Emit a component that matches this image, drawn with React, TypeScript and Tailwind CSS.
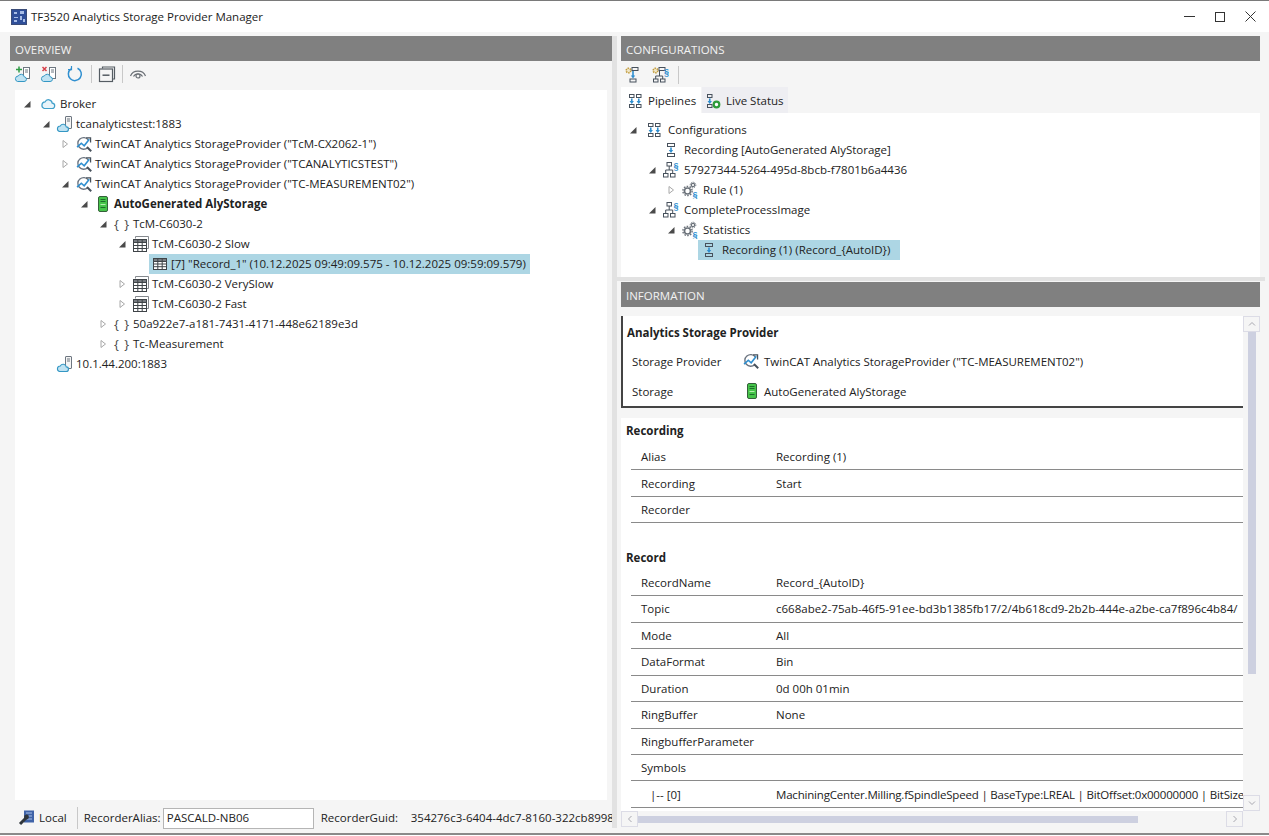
import type { ReactNode } from "react";

const dark = "#47515c";
const blue = "#2f8fd0";

function Cloud() {
  return (
    <svg viewBox="0 0 16 16" width="16" height="16" fill="none">
      <path d="M4.2 12.5h7.6a2.7 2.7 0 0 0 .4-5.4A3.8 3.8 0 0 0 5 5.9a3.4 3.4 0 0 0-.8 6.6Z" fill="#e8f4fa" stroke="#3f9fca" strokeWidth="1.2" />
    </svg>
  );
}

function ServerCloud() {
  return (
    <svg viewBox="0 0 18 18" width="18" height="18" fill="none">
      <rect x="9.5" y="1.5" width="6" height="12" rx="0.5" fill="#f4f4f4" stroke="#6d7680" />
      <path d="M11 4h3M11 6h3" stroke="#6d7680" />
      <path d="M3.5 16.5h6.5a2.3 2.3 0 0 0 .3-4.6 3.2 3.2 0 0 0-6-.9 2.8 2.8 0 0 0-.8 5.5Z" fill="#bfe2f2" stroke="#3497c4" strokeWidth="1.1" />
    </svg>
  );
}

function Provider() {
  return (
    <svg viewBox="0 0 16 16" width="17" height="17" fill="none">
      <path d="M11.5 3.5A5.5 5.5 0 1 0 11 11" stroke="#6b7480" strokeWidth="1.3" />
      <path d="M1 10.5 5 6.8l2.7 2.4L12.5 3" stroke={blue} strokeWidth="1.5" />
      <path d="M9.5 1.8h4.2V6" stroke={dark} strokeWidth="1.2" />
      <path d="m10.3 10.3 4 4" stroke={dark} strokeWidth="1.9" />
    </svg>
  );
}

function Storage() {
  return (
    <svg viewBox="0 0 16 16" width="16" height="16">
      <rect x="3.5" y="0.5" width="9" height="15" rx="1.5" fill="#46c44a" stroke="#34603a" />
      <path d="M5.5 3.5h5M5.5 5.5h5M5.5 11.5h5" stroke="#1d6e2b" strokeWidth="1" />
      <rect x="5.5" y="8" width="5" height="1" fill="#b6f0b0" />
    </svg>
  );
}

function Braces() {
  return <span className="w-[16px] whitespace-nowrap text-center text-[13px] leading-none tracking-[1px] text-[#4b4b4b]">{"{ }"}</span>;
}

function Grid() {
  return (
    <svg viewBox="0 0 16 16" width="16" height="16" fill="none" stroke="#3f4448">
      <rect x="1.5" y="2.5" width="13" height="11" fill="#fff" />
      <path d="M1.5 2.5h13v3h-13z" fill="#777b80" />
      <path d="M1.5 8h13M1.5 10.7h13M5.8 2.5v11M10.2 2.5v11" />
    </svg>
  );
}

function GridStack() {
  return (
    <svg viewBox="0 0 18 18" width="18" height="18" fill="none" stroke="#3f4448">
      <path d="M3.5 3.5v-2h13v12h-1.5" stroke="#85898e" />
      <rect x="1.5" y="4.5" width="13" height="12" fill="#fff" />
      <path d="M1.5 4.5h13v3h-13z" fill="#777b80" />
      <path d="M1.5 10.5h13M1.5 13.5h13M5.8 4.5v12M10.2 4.5v12" />
    </svg>
  );
}

function ArrowDown({ x }: { x: number }) {
  return (
    <>
      <path d={`M${x} 5.5v3`} stroke={blue} strokeWidth="1.6" />
      <path d={`M${x - 2.2} 8h4.4L${x} 11Z`} fill={blue} stroke="none" />
    </>
  );
}

function Pipeline({ double = false, live = false }: { double?: boolean; live?: boolean }) {
  return (
    <svg viewBox="0 0 16 16" width="16" height="16" fill="none" stroke={dark}>
      <rect x="2.5" y="1.5" width="4.5" height="3" />
      <rect x="2.5" y="11.5" width="4.5" height="3" />
      <ArrowDown x={4.75} />
      {double && (
        <>
          <rect x="9.5" y="1.5" width="4.5" height="3" />
          <rect x="9.5" y="11.5" width="4.5" height="3" />
          <ArrowDown x={11.75} />
        </>
      )}
      {live && <circle cx="11.5" cy="11.5" r="2.8" fill="#fff" stroke="#2e9c3a" strokeWidth="2.2" />}
    </svg>
  );
}

function Single() {
  return (
    <svg viewBox="0 0 16 16" width="16" height="16" fill="none" stroke={dark}>
      <rect x="4.5" y="1.5" width="7" height="3" />
      <rect x="4.5" y="11.5" width="7" height="3" />
      <ArrowDown x={8} />
    </svg>
  );
}

function Tree3() {
  return (
    <svg viewBox="0 0 18 18" width="18" height="18" fill="none" stroke={dark}>
      <rect x="5" y="1.5" width="4.5" height="3.5" />
      <rect x="1.5" y="12.5" width="4.5" height="3.5" />
      <rect x="8.5" y="12.5" width="4.5" height="3.5" />
      <path d="M7.2 5v4M3.7 12.5V9h7v3.5" />
      <text x="11.5" y="8" fontSize="9" fontWeight="700" fontFamily="Liberation Sans" fill={blue} stroke="none">§</text>
    </svg>
  );
}

function Gears() {
  return (
    <svg viewBox="0 0 18 18" width="18" height="18" fill="none" stroke="#6b727a">
      <circle cx="6.5" cy="10" r="3" strokeWidth="1.6" />
      <circle cx="6.5" cy="10" r="4.6" strokeWidth="1.4" strokeDasharray="1.6 1.29" />
      <circle cx="12" cy="4" r="1.7" strokeWidth="1.2" />
      <circle cx="12" cy="4" r="2.8" strokeWidth="1" strokeDasharray="1.2 1" />
      <text x="11.5" y="17" fontSize="9" fontWeight="700" fontFamily="Liberation Sans" fill={blue} stroke="none">§</text>
    </svg>
  );
}

function GearPipeline({ tree = false }: { tree?: boolean }) {
  return (
    <svg viewBox="0 0 18 18" width="18" height="18" fill="none" stroke={dark}>
      <circle cx="4.5" cy="4.5" r="2.3" fill="#f0e6c8" stroke="#c09a3a" strokeWidth="1.6" strokeDasharray="1.4 .8" />
      <rect x="8" y="1.5" width="6" height="3" />
      {tree ? (
        <>
          <rect x="2.5" y="13" width="4.5" height="3" />
          <rect x="9.5" y="13" width="4.5" height="3" />
          <path d="M4.7 13v-3h7v3M8.5 5v5" />
          <text x="13" y="9" fontSize="9" fontWeight="700" fontFamily="Liberation Sans" fill={blue} stroke="none">§</text>
        </>
      ) : (
        <>
          <rect x="6" y="13" width="6" height="3" />
          <path d="M9 5v5" stroke={blue} strokeWidth="1.6" />
          <path d="M6.8 9.5h4.4L9 12.5Z" fill={blue} stroke="none" />
        </>
      )}
    </svg>
  );
}

function ToolCloud({ kind }: { kind: "add" | "remove" }) {
  return (
    <svg viewBox="0 0 18 18" width="18" height="18" fill="none">
      <rect x="9.5" y="2.5" width="6" height="11" fill="#fff" stroke="#6d7680" />
      <path d="M11 5h3M11 7h3" stroke="#6d7680" />
      <path d="M3.5 16.5h6.5a2.3 2.3 0 0 0 .3-4.6 3.2 3.2 0 0 0-6-.9 2.8 2.8 0 0 0-.8 5.5Z" fill="#bfe2f2" stroke="#3497c4" />
      {kind === "add" ? (
        <path d="M5 1.5v6M2 4.5h6" stroke="#2f9c45" strokeWidth="1.5" />
      ) : (
        <path d="m2.5 2 4 4M6.5 2l-4 4" stroke="#d6404a" strokeWidth="1.5" />
      )}
    </svg>
  );
}

function Refresh() {
  return (
    <svg viewBox="0 0 18 18" width="18" height="18" fill="none" stroke={blue} strokeWidth="1.5">
      <path d="M11.5 3.2A6.5 6.5 0 1 1 5 3.9" />
      <path d="M5.5 1v3.6H2" strokeWidth="1.2" />
    </svg>
  );
}

function Collapse() {
  return (
    <svg viewBox="0 0 18 18" width="18" height="18" fill="none" stroke="#555c63" strokeWidth="1.2">
      <path d="M4.5 3.5V2h12v12h-1.5" />
      <rect x="1.5" y="4" width="13" height="12.5" fill="#f5f5f5" />
      <path d="M4.5 10.2h7" strokeWidth="1.5" />
    </svg>
  );
}

function Eye() {
  return (
    <svg viewBox="0 0 18 18" width="18" height="18" fill="none" stroke="#6a6f75" strokeWidth="1.2">
      <path d="M1.5 11C4 4.5 14 4.5 16.5 11" />
      <path d="M4.5 11.5C6.5 8 11.5 8 13.5 11.5" />
      <circle cx="9" cy="11" r="2" />
    </svg>
  );
}

function Wrench() {
  return (
    <svg viewBox="0 0 18 18" width="18" height="18" fill="none">
      <rect x="6" y="1.5" width="10" height="12" fill="#3f63a8" />
      <path d="M8 4h6M8 7h6M8 10h6" stroke="#a9c1e8" />
      <path d="m2 15 6-6" stroke="#30363c" strokeWidth="3" />
      <circle cx="8.5" cy="8" r="2.4" fill="#30363c" />
    </svg>
  );
}

function Logo() {
  return (
    <svg viewBox="0 0 16 16" width="16" height="16">
      <rect x="0.5" y="0.5" width="15" height="15" fill="#2f4f9a" stroke="#3b4c78" />
      <path d="M3 3h3v2H3zM9 2h4v3H9zM3 8h4v1H3zM9 7h2v4H9zM3 11h3v2H3zM12 10h2v3h-2z" fill="#a8bde6" />
    </svg>
  );
}

function Expander({ state }: { state?: "open" | "closed" }) {
  if (state === "open")
    return (
      <svg viewBox="0 0 10 10" width="10" height="10" className="shrink-0">
        <path d="M8.5 2v6.5H2Z" fill="#4a4a4a" />
      </svg>
    );
  if (state === "closed")
    return (
      <svg viewBox="0 0 10 10" width="10" height="10" className="shrink-0">
        <path d="M3 1.5 7.5 5 3 8.5Z" fill="#fff" stroke="#a8a8a8" />
      </svg>
    );
  return <span className="w-[10px] shrink-0" />;
}

type Node = {
  level: number;
  state?: "open" | "closed";
  icon: ReactNode;
  text: string;
  bold?: boolean;
  selected?: string;
  root?: boolean;
};

function Row({ node, gap }: { node: Node; gap: string }) {
  return (
    <div className="flex h-[20px] items-center" style={{ paddingLeft: 7 + node.level * 19 }}>
      <Expander state={node.state} />
      <div className={`ml-[3px] flex h-[20px] items-center pl-[2px] ${gap} ${node.selected ?? ""}`}>
        <span className={`flex shrink-0 justify-center ${node.root ? "w-[21px]" : "w-[18px]"}`}>{node.icon}</span>
        <span className={`whitespace-nowrap ${node.bold ? "font-bold" : ""}`}>{node.text}</span>
      </div>
    </div>
  );
}

const overview: Node[] = [
  { level: 0, state: "open", icon: <Cloud />, text: "Broker", root: true },
  { level: 1, state: "open", icon: <ServerCloud />, text: "tcanalyticstest:1883" },
  { level: 2, state: "closed", icon: <Provider />, text: 'TwinCAT Analytics StorageProvider ("TcM-CX2062-1")' },
  { level: 2, state: "closed", icon: <Provider />, text: 'TwinCAT Analytics StorageProvider ("TCANALYTICSTEST")' },
  { level: 2, state: "open", icon: <Provider />, text: 'TwinCAT Analytics StorageProvider ("TC-MEASUREMENT02")' },
  { level: 3, state: "open", icon: <Storage />, text: "AutoGenerated AlyStorage", bold: true },
  { level: 4, state: "open", icon: <Braces />, text: "TcM-C6030-2" },
  { level: 5, state: "open", icon: <GridStack />, text: "TcM-C6030-2 Slow" },
  { level: 6, icon: <Grid />, text: '[7] "Record_1" (10.12.2025 09:49:09.575 - 10.12.2025 09:59:09.579)', selected: "bg-[#add6e4] pr-[4px]" },
  { level: 5, state: "closed", icon: <GridStack />, text: "TcM-C6030-2 VerySlow" },
  { level: 5, state: "closed", icon: <GridStack />, text: "TcM-C6030-2 Fast" },
  { level: 4, state: "closed", icon: <Braces />, text: "50a922e7-a181-7431-4171-448e62189e3d" },
  { level: 4, state: "closed", icon: <Braces />, text: "Tc-Measurement" },
  { level: 1, icon: <ServerCloud />, text: "10.1.44.200:1883" },
];

const pipelines: Node[] = [
  { level: 0, state: "open", icon: <Pipeline double />, text: "Configurations", root: true },
  { level: 1, icon: <Single />, text: "Recording [AutoGenerated AlyStorage]" },
  { level: 1, state: "open", icon: <Tree3 />, text: "57927344-5264-495d-8bcb-f7801b6a4436" },
  { level: 2, state: "closed", icon: <Gears />, text: "Rule (1)" },
  { level: 1, state: "open", icon: <Tree3 />, text: "CompleteProcessImage" },
  { level: 2, state: "open", icon: <Gears />, text: "Statistics" },
  { level: 3, icon: <Single />, text: "Recording (1) (Record_{AutoID})", selected: "bg-[#add6e4] pr-[10px]" },
];

function Header({ title }: { title: string }) {
  return <div className="flex h-[25px] shrink-0 items-center bg-[#808080] pl-[5px] pt-[2px] text-[#f2f2f2]">{title}</div>;
}

function InfoRow({ label, value, tight = false }: { label: string; value?: string; tight?: boolean }) {
  return (
    <div className="ml-[10px] flex h-[26.45px] shrink-0 items-center border-b border-[#8a8a8a] pl-[10px]">
      <span className="w-[135px] shrink-0 whitespace-nowrap">{label}</span>
      <span className={`whitespace-nowrap ${tight ? "tracking-[-0.19px]" : ""}`}>{value}</span>
    </div>
  );
}

export default function App() {
  return (
    <div
      className="flex h-[836px] w-[1269px] flex-col overflow-hidden border-t border-[#7a7a7a] bg-[#f5f5f5] text-[11.5px] text-[#222]"
      style={{ fontFamily: '"Open Sans", "Noto Sans", sans-serif' }}
    >
      <div className="flex h-[31px] shrink-0 items-center bg-white pl-[11px]">
        <Logo />
        <span className="ml-[4px] text-[#1c1c1c]">TF3520 Analytics Storage Provider Manager</span>
        <div className="ml-auto flex items-center gap-[20px] pr-[13px]">
          <span className="h-px w-[11px] bg-[#333]" />
          <span className="h-[10px] w-[10px] border border-[#333]" />
          <svg viewBox="0 0 11 11" width="11" height="11" stroke="#333" fill="none">
            <path d="m.5.5 10 10M10.5.5l-10 10" />
          </svg>
        </div>
      </div>

      <div className="flex min-h-0 flex-1 pl-[10px] pt-[4px]">
        {/* left side */}
        <div className="flex w-[602px] shrink-0 flex-col">
          <Header title="OVERVIEW" />
          <div className="flex h-[29px] shrink-0 items-center pb-[3px] pl-[4px]">
            <ToolCloud kind="add" />
            <span className="ml-[8px]"><ToolCloud kind="remove" /></span>
            <span className="ml-[8px]"><Refresh /></span>
            <span className="ml-[7px] h-[18px] w-px bg-[#c8c8c8]" />
            <span className="ml-[6px]"><Collapse /></span>
            <span className="ml-[6px] h-[18px] w-px bg-[#c8c8c8]" />
            <span className="ml-[6px]"><Eye /></span>
          </div>
          <div className="mx-[5px] flex-1 bg-white pt-[4px]">
            {overview.map((n) => (
              <Row key={n.text} node={n} gap="gap-[2px]" />
            ))}
          </div>
          <div className="flex h-[33px] shrink-0 items-center pl-[8px] pt-[3px]">
            <Wrench />
            <span className="ml-[3px]">Local</span>
            <span className="ml-[10px] h-[22px] w-px bg-[#c8c8c8]" />
            <span className="ml-[6px] w-[79px] whitespace-nowrap">RecorderAlias:</span>
            <div className="flex h-[21px] w-[151px] items-center border border-[#b5b5b5] bg-white pl-[3px]">PASCALD-NB06</div>
            <span className="ml-[7px] w-[90px] whitespace-nowrap">RecorderGuid:</span>
            <span className="w-[201px] overflow-hidden whitespace-nowrap">354276c3-6404-4dc7-8160-322cb89981aa</span>
          </div>
        </div>

        <div className="mb-[5px] w-[5px] shrink-0 bg-[#e2e2e2]" />

        {/* right side */}
        <div className="flex w-[648px] shrink-0 flex-col">
          <div className="flex h-[241px] shrink-0 flex-col px-[4px]">
            <div className="w-[639px]">
              <Header title="CONFIGURATIONS" />
            </div>
            <div className="flex h-[26px] shrink-0 items-center gap-[9px] pl-[3px] pt-[2px]">
              <GearPipeline />
              <GearPipeline tree />
              <span className="h-[18px] w-px bg-[#c8c8c8]" />
            </div>
            <div className="flex h-[26px] shrink-0">
              <div className="flex w-[80px] items-center gap-[4px] bg-white pl-[6px] pt-px">
                <Pipeline double />
                <span className="ml-[1px]">Pipelines</span>
              </div>
              <div className="ml-px flex w-[86px] items-center gap-[5px] bg-[#eeeef2] pl-[3px] pt-px">
                <Pipeline live />
                <span>Live Status</span>
              </div>
            </div>
            <div className="w-[639px] flex-1 bg-white pt-[7px]">
              {pipelines.map((n) => (
                <Row key={n.text} node={n} gap="gap-[4px]" />
              ))}
            </div>
          </div>

          <div className="h-[4px] shrink-0 bg-[#e2e2e2]" />

          <div className="flex min-h-0 flex-1 flex-col px-[4px] pt-px">
            <div className="w-[639px]">
              <Header title="INFORMATION" />
            </div>
            <div className="mt-[9px] flex w-[639px] pb-[5px]">
              <div className="flex w-[622px] flex-col">
                <div className="h-[495px] overflow-hidden bg-white">
                  <div className="h-[92px] border-b-2 border-l-2 border-[#444] pl-[4px] pt-[8px]">
                    <div className="font-bold">Analytics Storage Provider</div>
                    <div className="mt-[5px] flex h-[30px] items-center pl-[5px]">
                      <span className="w-[111px]">Storage Provider</span>
                      <Provider />
                      <span className="ml-[4px]">TwinCAT Analytics StorageProvider ("TC-MEASUREMENT02")</span>
                    </div>
                    <div className="flex h-[30px] items-center pl-[5px]">
                      <span className="w-[112px]">Storage</span>
                      <Storage />
                      <span className="ml-[4px]">AutoGenerated AlyStorage</span>
                    </div>
                  </div>
                  <div className="h-[10px] bg-[#f5f5f5]" />
                  <div className="flex h-[26px] items-center pl-[5px] font-bold">Recording</div>
                  <InfoRow label="Alias" value="Recording (1)" />
                  <InfoRow label="Recording" value="Start" />
                  <InfoRow label="Recorder" />
                  <div className="flex h-[46.65px] items-end pb-[4px] pl-[5px] font-bold">Record</div>
                  <InfoRow label="RecordName" value="Record_{AutoID}" />
                  <InfoRow label="Topic" value="c668abe2-75ab-46f5-91ee-bd3b1385fb17/2/4b618cd9-2b2b-444e-a2be-ca7f896c4b84/" />
                  <InfoRow label="Mode" value="All" />
                  <InfoRow label="DataFormat" value="Bin" />
                  <InfoRow label="Duration" value="0d 00h 01min" />
                  <InfoRow label="RingBuffer" value="None" />
                  <InfoRow label="RingbufferParameter" />
                  <InfoRow label="Symbols" />
                  <InfoRow label={"\u00a0\u00a0\u00a0|-- [0]"} value="MachiningCenter.Milling.fSpindleSpeed | BaseType:LREAL | BitOffset:0x00000000 | BitSize" tight />
                </div>
                {/* horizontal scrollbar */}
                <div className="flex h-[16px] items-center">
                  <div className="flex h-[16px] w-[17px] items-center justify-center border border-[#dcdce6]">
                    <svg viewBox="0 0 8 8" width="8" height="8" fill="none" stroke="#a8a8b0"><path d="M5.5 1 2.5 4l3 3" /></svg>
                  </div>
                  <div className="h-[7px] w-[500px] bg-[#cdd0e0]" />
                  <div className="ml-auto flex h-[16px] w-[17px] items-center justify-center border border-[#dcdce6]">
                    <svg viewBox="0 0 8 8" width="8" height="8" fill="none" stroke="#a8a8b0"><path d="m2.5 1 3 3-3 3" /></svg>
                  </div>
                </div>
              </div>
              {/* vertical scrollbar */}
              <div className="flex h-[495px] w-[17px] flex-col items-center">
                <div className="flex h-[16px] w-[17px] shrink-0 items-center justify-center border border-[#dcdce6]">
                  <svg viewBox="0 0 8 8" width="8" height="8" fill="none" stroke="#a8a8b0"><path d="m1 5.5 3-3 3 3" /></svg>
                </div>
                <div className="h-[342px] w-[8px] shrink-0 bg-[#cdd0e0]" />
                <div className="mt-auto flex h-[16px] w-[17px] shrink-0 items-center justify-center border border-[#dcdce6]">
                  <svg viewBox="0 0 8 8" width="8" height="8" fill="none" stroke="#a8a8b0"><path d="m1 2.5 3 3 3-3" /></svg>
                </div>
              </div>
            </div>
          </div>
        </div>
      </div>

      <div className="h-[3px] shrink-0 border-t-2 border-[#8a8a8a] bg-white" />
    </div>
  );
}
